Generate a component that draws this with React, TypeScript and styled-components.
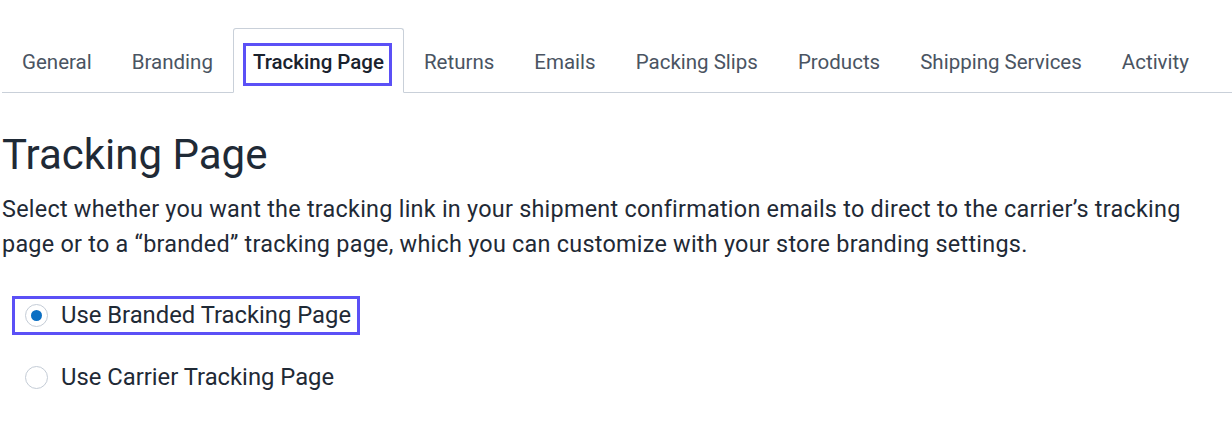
import React, { useState } from 'react'
import styled, { createGlobalStyle } from 'styled-components'

const GlobalStyle = createGlobalStyle`
  html, body {
    margin: 0;
    padding: 0;
    background: #ffffff;
  }

  body {
    font-family: Roboto, 'Liberation Sans', Arial, sans-serif;
    color: #1f2a36;
  }
`

const Page = styled.div`
  padding: 28px 0 0 2px;
`

const TabBar = styled.nav`
  display: flex;
  align-items: stretch;
  height: 64px;
  border-bottom: 1px solid #c9d0d9;
`

const Tab = styled.div<{ $active?: boolean }>`
  display: flex;
  align-items: center;
  padding: 3px 19px 0;
  margin-bottom: ${({ $active }) => ($active ? '-1px' : '0')};
  font-size: 20.5px;
  line-height: 24px;
  font-weight: ${({ $active }) => ($active ? 500 : 400)};
  color: ${({ $active }) => ($active ? '#1a222d' : '#4a5462')};
  background: ${({ $active }) => ($active ? '#ffffff' : 'transparent')};
  border: 1px solid ${({ $active }) => ($active ? '#c9d0d9' : 'transparent')};
  border-bottom-color: ${({ $active }) => ($active ? '#ffffff' : 'transparent')};
  border-radius: 3px 3px 0 0;
  cursor: pointer;
  white-space: nowrap;
`

const Highlight = styled.span`
  position: relative;

  &::after {
    content: '';
    position: absolute;
    inset: -7px -8px -12px -10px;
    border: 3px solid #5b50f6;
    pointer-events: none;
  }
`

const Content = styled.section`
  padding-right: 40px;
`

const Title = styled.h1`
  margin: 0;
  padding-top: 36px;
  font-size: 42px;
  line-height: 52px;
  font-weight: 400;
  color: #1f2a36;
`

const Description = styled.p`
  margin: 11px 0 0;
  font-size: 23.4px;
  line-height: 35px;
  letter-spacing: 0.25px;
  color: #1f2a36;
`

const Options = styled.div`
  display: flex;
  flex-direction: column;
  align-items: flex-start;
  gap: 23px;
  margin-top: 34px;
  padding-left: 23px;
`

const OptionRow = styled.label`
  position: relative;
  display: flex;
  align-items: center;
  gap: 13px;
  font-size: 23.8px;
  line-height: 39px;
  color: #1f2a36;
  cursor: pointer;
`

const RadioCircle = styled.span<{ $checked: boolean }>`
  display: flex;
  align-items: center;
  justify-content: center;
  width: 23px;
  height: 23px;
  box-sizing: border-box;
  border-radius: 50%;
  border: 1px solid #c4ccd6;
  background: #ffffff;

  &::after {
    content: '';
    width: 11px;
    height: 11px;
    border-radius: 50%;
    background: ${({ $checked }) => ($checked ? '#0b6fc3' : 'transparent')};
  }
`

const OptionBox = styled.span`
  position: absolute;
  inset: 0 -9px 0 -13px;
  border: 3px solid #5b50f6;
  pointer-events: none;
`

const tabs = [
  'General',
  'Branding',
  'Tracking Page',
  'Returns',
  'Emails',
  'Packing Slips',
  'Products',
  'Shipping Services',
  'Activity',
]

const options = [
  { id: 'branded', label: 'Use Branded Tracking Page' },
  { id: 'carrier', label: 'Use Carrier Tracking Page' },
]

const App: React.FC = () => {
  const [choice, setChoice] = useState('branded')

  return (
    <>
      <GlobalStyle />
      <Page>
        <TabBar>
          {tabs.map((tab) => {
            const active = tab === 'Tracking Page'
            return (
              <Tab key={tab} $active={active}>
                {active ? <Highlight>{tab}</Highlight> : tab}
              </Tab>
            )
          })}
        </TabBar>

        <Content>
          <Title>Tracking Page</Title>
          <Description>
            Select whether you want the tracking link in your shipment confirmation emails to direct to the
            carrier’s tracking page or to a “branded” tracking page, which you can customize with your store
            branding settings.
          </Description>

          <Options>
            {options.map((option) => (
              <OptionRow key={option.id} onClick={() => setChoice(option.id)}>
                {option.id === 'branded' && <OptionBox />}
                <RadioCircle $checked={choice === option.id} />
                {option.label}
              </OptionRow>
            ))}
          </Options>
        </Content>
      </Page>
    </>
  )
}

export default App
